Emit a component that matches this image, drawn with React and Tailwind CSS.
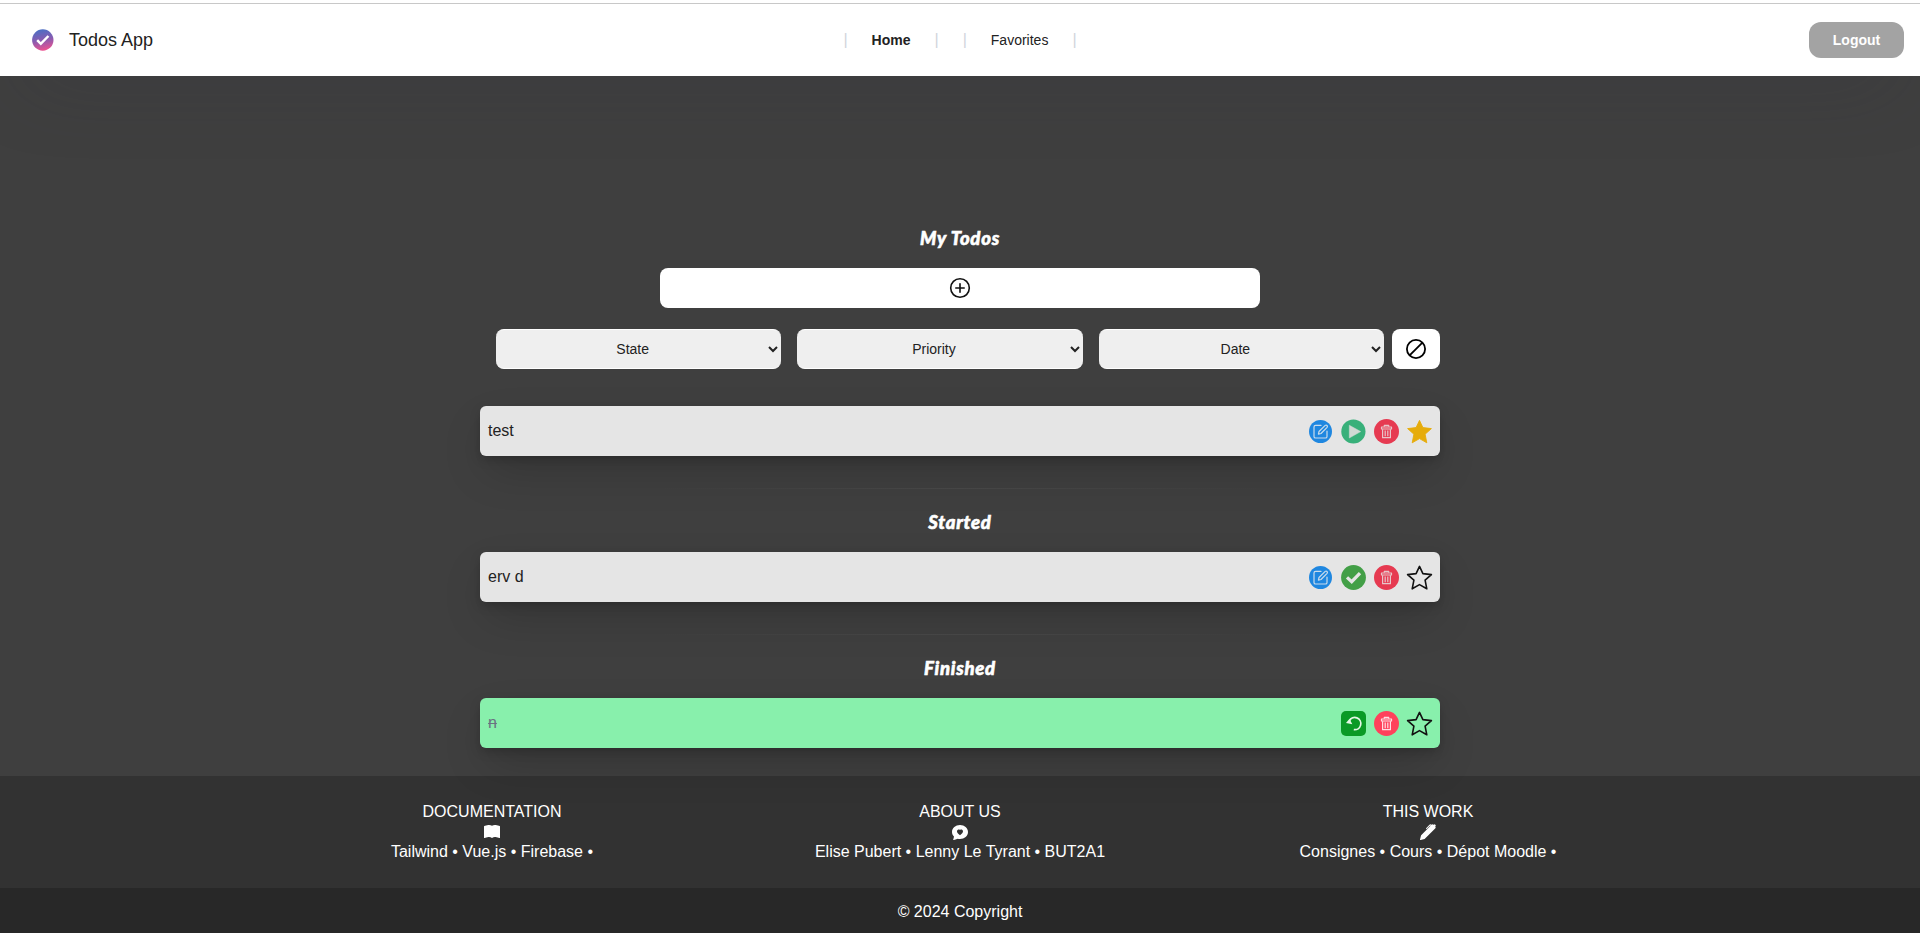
import React from "react";
import { BsBookFill, BsChatHeartFill, BsPenFill } from "react-icons/bs";

function Logo() {
  return (
    <svg className="h-[22px] w-[22px]" viewBox="0 0 22 22">
      <defs>
        <linearGradient id="logo" x1="0.4" y1="0" x2="0.6" y2="1">
          <stop offset="0" stopColor="#4a6fc4" />
          <stop offset="0.5" stopColor="#8a5bb0" />
          <stop offset="1" stopColor="#f0528f" />
        </linearGradient>
      </defs>
      <circle cx="10.8" cy="11" r="10.7" fill="url(#logo)" />
      <path d="M5.2 11.2l3.6 3.6 7.6-7.8" fill="none" stroke="#fff" strokeWidth="2.5" />
    </svg>
  );
}

function EditIcon() {
  return (
    <svg className="h-[25px] w-[25px]" viewBox="0 0 25 25" fill="none">
      <circle cx="12.5" cy="12.5" r="11.5" fill="#1f87e0" />
      <g stroke="#c9dcec" strokeWidth="1.2" strokeLinecap="round" strokeLinejoin="round">
        <path d="M13 6.4H7.6a1.6 1.6 0 0 0-1.6 1.6v9.4A1.6 1.6 0 0 0 7.6 19h9.8a1.6 1.6 0 0 0 1.6-1.6V12" />
        <path d="M10.4 15.2l.6-2.7 6.2-6.1a1.35 1.35 0 0 1 1.9 1.9l-6.1 6.2z" />
      </g>
    </svg>
  );
}

function PlayIcon() {
  return (
    <svg className="h-[25px] w-[25px]" viewBox="0 0 25 25">
      <circle cx="12.4" cy="12.5" r="12.1" fill="#38b07a" />
      <path d="M8.3 6.2v12.8l11.4-6.4z" fill="#d0d9d4" stroke="#d0d9d4" strokeWidth=".5" />
    </svg>
  );
}

function CheckIcon() {
  return (
    <svg className="h-[25px] w-[25px]" viewBox="0 0 25 25">
      <circle cx="12.5" cy="12.5" r="12.4" fill="#439f47" />
      <path d="M6 12.4l4.7 4.3 8.3-8.6" fill="none" stroke="#e5e5e5" strokeWidth="3.3" />
    </svg>
  );
}

function TrashIcon({ bright }) {
  return (
    <svg className="h-[25px] w-[25px]" viewBox="0 0 25 25" fill="none">
      <circle cx="12.5" cy="12.5" r="12.5" fill={bright ? "#ff415b" : "#e63a51"} />
      <g stroke={bright ? "#ffdfe3" : "#e8c6ca"} strokeWidth="1.2" strokeLinejoin="round">
        <path d="M7.5 8h10v2h-10z" />
        <path d="M10.3 7.8V6.4h4.4v1.4" />
        <path d="M8.6 10.3v8.4h7.8v-8.4M11.2 11.6v5.6M13.8 11.6v5.6" />
      </g>
    </svg>
  );
}

function UndoIcon() {
  return (
    <svg className="h-[25px] w-[25px]" viewBox="0 0 25 25" fill="none">
      <rect width="25" height="25" rx="5" fill="#0a9a26" />
      <path d="M8.3 9.8A6.1 6.1 0 1 1 12.8 18.6" stroke="#e4f6e6" strokeWidth="1.7" />
      <path d="M5 12.1l6.3 1.1-2.8-5.4z" fill="#e4f6e6" />
    </svg>
  );
}

function StarIcon({ filled }) {
  return (
    <svg className="h-[25px] w-[25px] overflow-visible" viewBox="0 0 25 25">
      <path
        d="M12.5 1.4l3.4 7.2 8.5 1-6.3 5.6 1.7 8.6-7.3-4.2-7.3 4.2 1.7-8.6L.6 9.6l8.5-1z"
        fill={filled ? "#e6ac0b" : "none"}
        stroke={filled ? "#e6ac0b" : "#111"}
        strokeWidth={filled ? 0.9 : 1.6}
        strokeLinejoin="round"
      />
    </svg>
  );
}

function Title({ children }) {
  return (
    <h2 className="-mt-px mb-px text-center font-['Lato',sans-serif] text-[18.5px] leading-7 font-black tracking-[0.75px] text-white italic [-webkit-text-stroke:0.6px_white]">
      {children}
    </h2>
  );
}

function Divider() {
  return <hr className="mx-auto mt-8 h-px w-[600px] border-0 bg-linear-to-r from-transparent via-[#464646] to-transparent" />;
}

function Todo({ label, done, children }) {
  return (
    <div
      className={
        "flex h-[50px] items-center justify-between rounded-md px-2 shadow-[0_4px_12px_-2px_rgba(0,0,0,0.25),0_18px_45px_-8px_rgba(0,0,0,0.22)] " +
        (done ? "bg-[#88f0ac]" : "bg-[#e5e5e5]")
      }
    >
      <span className={done ? "text-gray-500 line-through" : "text-[#222]"}>{label}</span>
      <div className="flex gap-2 pt-px">{children}</div>
    </div>
  );
}

function Filter({ label }) {
  return (
    <select className="h-10 flex-1 rounded-lg border-y border-white bg-[#efefef] text-center text-sm text-[#222]">
      <option>{label}</option>
    </select>
  );
}

function FooterColumn({ title, icon, links }) {
  return (
    <div className="flex flex-col items-center">
      <p>{title}</p>
      {icon}
      <p>{links}</p>
    </div>
  );
}

export default function App() {
  return (
    <div className="flex h-[933px] flex-col overflow-hidden bg-[#3f3f3f] font-['Liberation_Sans',Arial,sans-serif] text-base">
      <header className="flex h-[76px] shrink-0 flex-col bg-white shadow-[0_20px_80px_-25px_rgba(50,50,62,0.45)]">
        <div className="mt-[3px] h-px shrink-0 bg-[#c8c8c8]" />
        <div className="grid flex-1 grid-cols-[1fr_auto_1fr] items-center pr-4 pl-8">
          <div className="flex items-center gap-[15px]">
            <Logo />
            <span className="text-lg text-[#222]">Todos App</span>
          </div>
          <nav className="mr-4 flex items-center justify-center text-sm text-[#222]">
            <span className="text-base text-gray-300">|</span>
            <a className="px-6 font-bold">Home</a>
            <span className="text-base text-gray-300">|</span>
            <span className="ml-6 text-base text-gray-300">|</span>
            <a className="px-6">Favorites</a>
            <span className="text-base text-gray-300">|</span>
          </nav>
          <button className="h-9 w-[95px] justify-self-end rounded-xl bg-[#a3a3a3] text-sm font-bold text-white">
            Logout
          </button>
        </div>
      </header>

      <main className="mx-auto flex h-[700px] w-[960px] shrink-0 flex-col pt-[149px]">
        <Title>My Todos</Title>
        <button className="mx-auto mt-[15px] flex h-10 w-[600px] shrink-0 items-center justify-center rounded-lg bg-white">
          <svg className="h-6 w-6" viewBox="0 0 24 24" fill="none" stroke="#111" strokeWidth="1.6" strokeLinecap="round">
            <circle cx="12" cy="12" r="9.3" />
            <path d="M12 7.8v8.4M7.8 12h8.4" />
          </svg>
        </button>
        <div className="mt-[21px] flex pl-4">
          <div className="flex flex-1 gap-4">
            <Filter label="State" />
            <Filter label="Priority" />
            <Filter label="Date" />
          </div>
          <button className="ml-2 flex h-10 w-12 items-center justify-center rounded-lg bg-white">
            <svg className="h-6 w-6" viewBox="0 0 24 24" fill="none" stroke="#000" strokeWidth="1.8">
              <circle cx="12" cy="12" r="9.1" />
              <path d="M5.6 18.4L18.4 5.6" />
            </svg>
          </button>
        </div>

        <div className="mt-[37px]">
          <Todo label="test">
            <EditIcon />
            <PlayIcon />
            <TrashIcon />
            <StarIcon filled />
          </Todo>
        </div>
        <Divider />
        <div className="mt-5 flex flex-col gap-[15px]">
          <Title>Started</Title>
          <Todo label="erv d">
            <EditIcon />
            <CheckIcon />
            <TrashIcon />
            <StarIcon />
          </Todo>
        </div>
        <Divider />
        <div className="mt-5 flex flex-col gap-[15px]">
          <Title>Finished</Title>
          <Todo label="n" done>
            <UndoIcon />
            <TrashIcon bright />
            <StarIcon />
          </Todo>
        </div>
      </main>

      <footer className="flex h-[157px] shrink-0 flex-col bg-black/20 text-white">
        <div className="mx-auto grid h-28 w-[1404px] shrink-0 grid-cols-3 py-6">
          <FooterColumn title="DOCUMENTATION" icon={<BsBookFill />} links="Tailwind • Vue.js • Firebase •" />
          <FooterColumn title="ABOUT US" icon={<BsChatHeartFill />} links="Elise Pubert • Lenny Le Tyrant • BUT2A1" />
          <FooterColumn title="THIS WORK" icon={<BsPenFill />} links="Consignes • Cours • Dépot Moodle •" />
        </div>
        <div className="flex-1 bg-black/20 pt-3 text-center">© 2024 Copyright</div>
      </footer>
    </div>
  );
}
